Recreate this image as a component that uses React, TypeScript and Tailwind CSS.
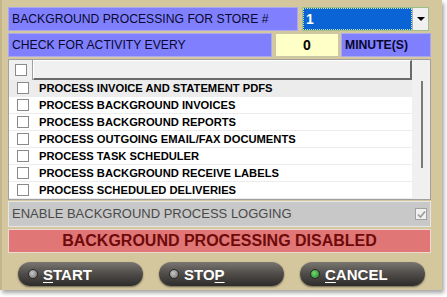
import React from "react";

const rows = [
  "PROCESS INVOICE AND STATEMENT PDFS",
  "PROCESS BACKGROUND INVOICES",
  "PROCESS BACKGROUND REPORTS",
  "PROCESS OUTGOING EMAIL/FAX DOCUMENTS",
  "PROCESS TASK SCHEDULER",
  "PROCESS BACKGROUND RECEIVE LABELS",
  "PROCESS SCHEDULED DELIVERIES",
];

function Box({ className = "" }: { className?: string }) {
  return <div className={`w-[12px] h-[12px] bg-white border border-[#8a8a8a] ${className}`} />;
}

function PillButton({ label, hot, green }: { label: string; hot: number; green?: boolean }) {
  return (
    <div className="w-[125px] h-[24px] rounded-full bg-gradient-to-b from-[#7a7672] via-[#4e4b48] to-[#2f2d2b] shadow-[0_1px_2px_rgba(0,0,0,0.5)] flex items-center pl-[10px] gap-[5px]">
      <div
        className={`w-[10px] h-[10px] rounded-full border border-[#2a2a2a] ${
          green
            ? "bg-[radial-gradient(circle_at_40%_40%,#6fdc6f,#1f7a1f)]"
            : "bg-[radial-gradient(circle_at_40%_40%,#c8c8c8,#6a6a6a)]"
        }`}
      />
      <span className="text-white font-bold text-[15px] leading-none" style={{ fontFamily: "'Liberation Sans', Arial, sans-serif" }}>
        {label.split("").map((c, i) => (
          <span key={i} className={i === hot ? "underline underline-offset-2" : ""}>
            {c}
          </span>
        ))}
      </span>
    </div>
  );
}

export default function App() {
  return (
    <div className="w-[447px] h-[297px] bg-white relative overflow-hidden" style={{ fontFamily: "'Liberation Sans', Arial, sans-serif" }}>
      <div className="w-[442px] h-[290px] bg-[#d5c79d] border-l-[2px] border-[#c4b68c] shadow-[2px_3px_4px_rgba(0,0,0,0.35)] flex flex-col pl-[6px] pt-[7px]">
        {/* row 1 */}
        <div className="flex h-[24px]">
          <div className="w-[290px] h-full bg-[#8080ff] border border-[#a8a8f0] flex items-center pl-[3px] text-[12.2px] text-[#08082e]">
            BACKGROUND PROCESSING FOR STORE #
          </div>
          <div className="ml-[4px] w-[127px] h-full flex border border-[#9bbf8a] bg-white">
            <div className="flex-1 bg-[#0a64d6] border border-dotted border-[#c8e8a0] flex items-center pl-[2px] text-white font-bold text-[14px]">
              1
            </div>
            <div className="w-[16px] bg-[#f0f0f0] border-l border-[#b0b0b0] flex items-center justify-center">
              <div className="w-0 h-0 border-l-[4px] border-r-[4px] border-t-[4px] border-l-transparent border-r-transparent border-t-black" />
            </div>
          </div>
        </div>
        {/* row 2 */}
        <div className="flex h-[24px] mt-[2px]">
          <div className="w-[264px] h-full bg-[#8080ff] border border-[#a8a8f0] flex items-center pl-[3px] text-[12.2px] text-[#08082e]">
            CHECK FOR ACTIVITY EVERY
          </div>
          <div className="ml-[3px] w-[64px] h-full bg-[#ffffc8] border border-[#c8c8a8] flex items-center justify-center font-bold text-[14px] text-black">
            0
          </div>
          <div className="ml-[2px] w-[90px] h-full bg-[#8080ff] border border-[#a8a8f0] flex items-center pl-[3px] font-bold text-[12.2px] text-[#08082e]">
            MINUTE(S)
          </div>
        </div>
        {/* list */}
        <div className="mt-[2px] w-[423px] h-[141px] bg-white border border-[#a0a0a0] flex">
          <div className="flex-1 flex flex-col">
            <div className="h-[21px] flex bg-[#f0f0f0]">
              <div className="w-[24px] flex items-center justify-center border-r border-[#a0a0a0]">
                <Box />
              </div>
              <div className="flex-1 border-t border-l border-white border-b-[2px] border-r-[2px] border-b-[#6a6a6a] border-r-[#6a6a6a] bg-[#f0f0f0]" />
            </div>
            {rows.map((r, i) => (
              <div key={r} className={`h-[17px] flex items-center border-b border-[#ececec] ${i === 0 ? "bg-[#ececec]" : "bg-white"}`}>
                <div className="w-[24px] flex items-center justify-center pl-[4px]">
                  <Box />
                </div>
                <div className="pl-[6px] pt-[1px] text-[11.2px] font-bold text-black">{r}</div>
              </div>
            ))}
          </div>
          <div className="w-[18px] bg-[#f0f0f0] flex justify-center pt-[21px]">
            <div className="w-[2px] h-[87px] bg-[#7a7a7a] ml-[1px]" />
          </div>
        </div>
        {/* enable */}
        <div className="mt-[1px] w-[423px] h-[26px] bg-[#c8c8c8] border border-[#e6e6e6] flex items-center justify-between pl-[3px] pr-[3px] text-[13px] text-[#4a4a4a]">
          <span>ENABLE BACKGROUND PROCESS LOGGING</span>
          <div className="w-[12px] h-[12px] bg-[#f0f0f0] border border-[#a0a0a0] flex items-center justify-center">
            <svg width="9" height="9" viewBox="0 0 9 9">
              <path d="M1 4.5 L3.5 7 L8 1.5" stroke="#9a9a9a" strokeWidth="1.6" fill="none" />
            </svg>
          </div>
        </div>
        {/* red bar */}
        <div className="mt-[2px] w-[423px] h-[24px] bg-[#e07676] border border-[#f0d8d8] flex items-center justify-center font-bold text-[16px] text-[#6e0a0a]">
          BACKGROUND PROCESSING DISABLED
        </div>
        {/* buttons */}
        <div className="flex gap-[16px] pl-[10px] mt-[9px]">
          <PillButton label="START" hot={0} />
          <PillButton label="STOP" hot={3} />
          <PillButton label="CANCEL" hot={0} green />
        </div>
      </div>
    </div>
  );
}
